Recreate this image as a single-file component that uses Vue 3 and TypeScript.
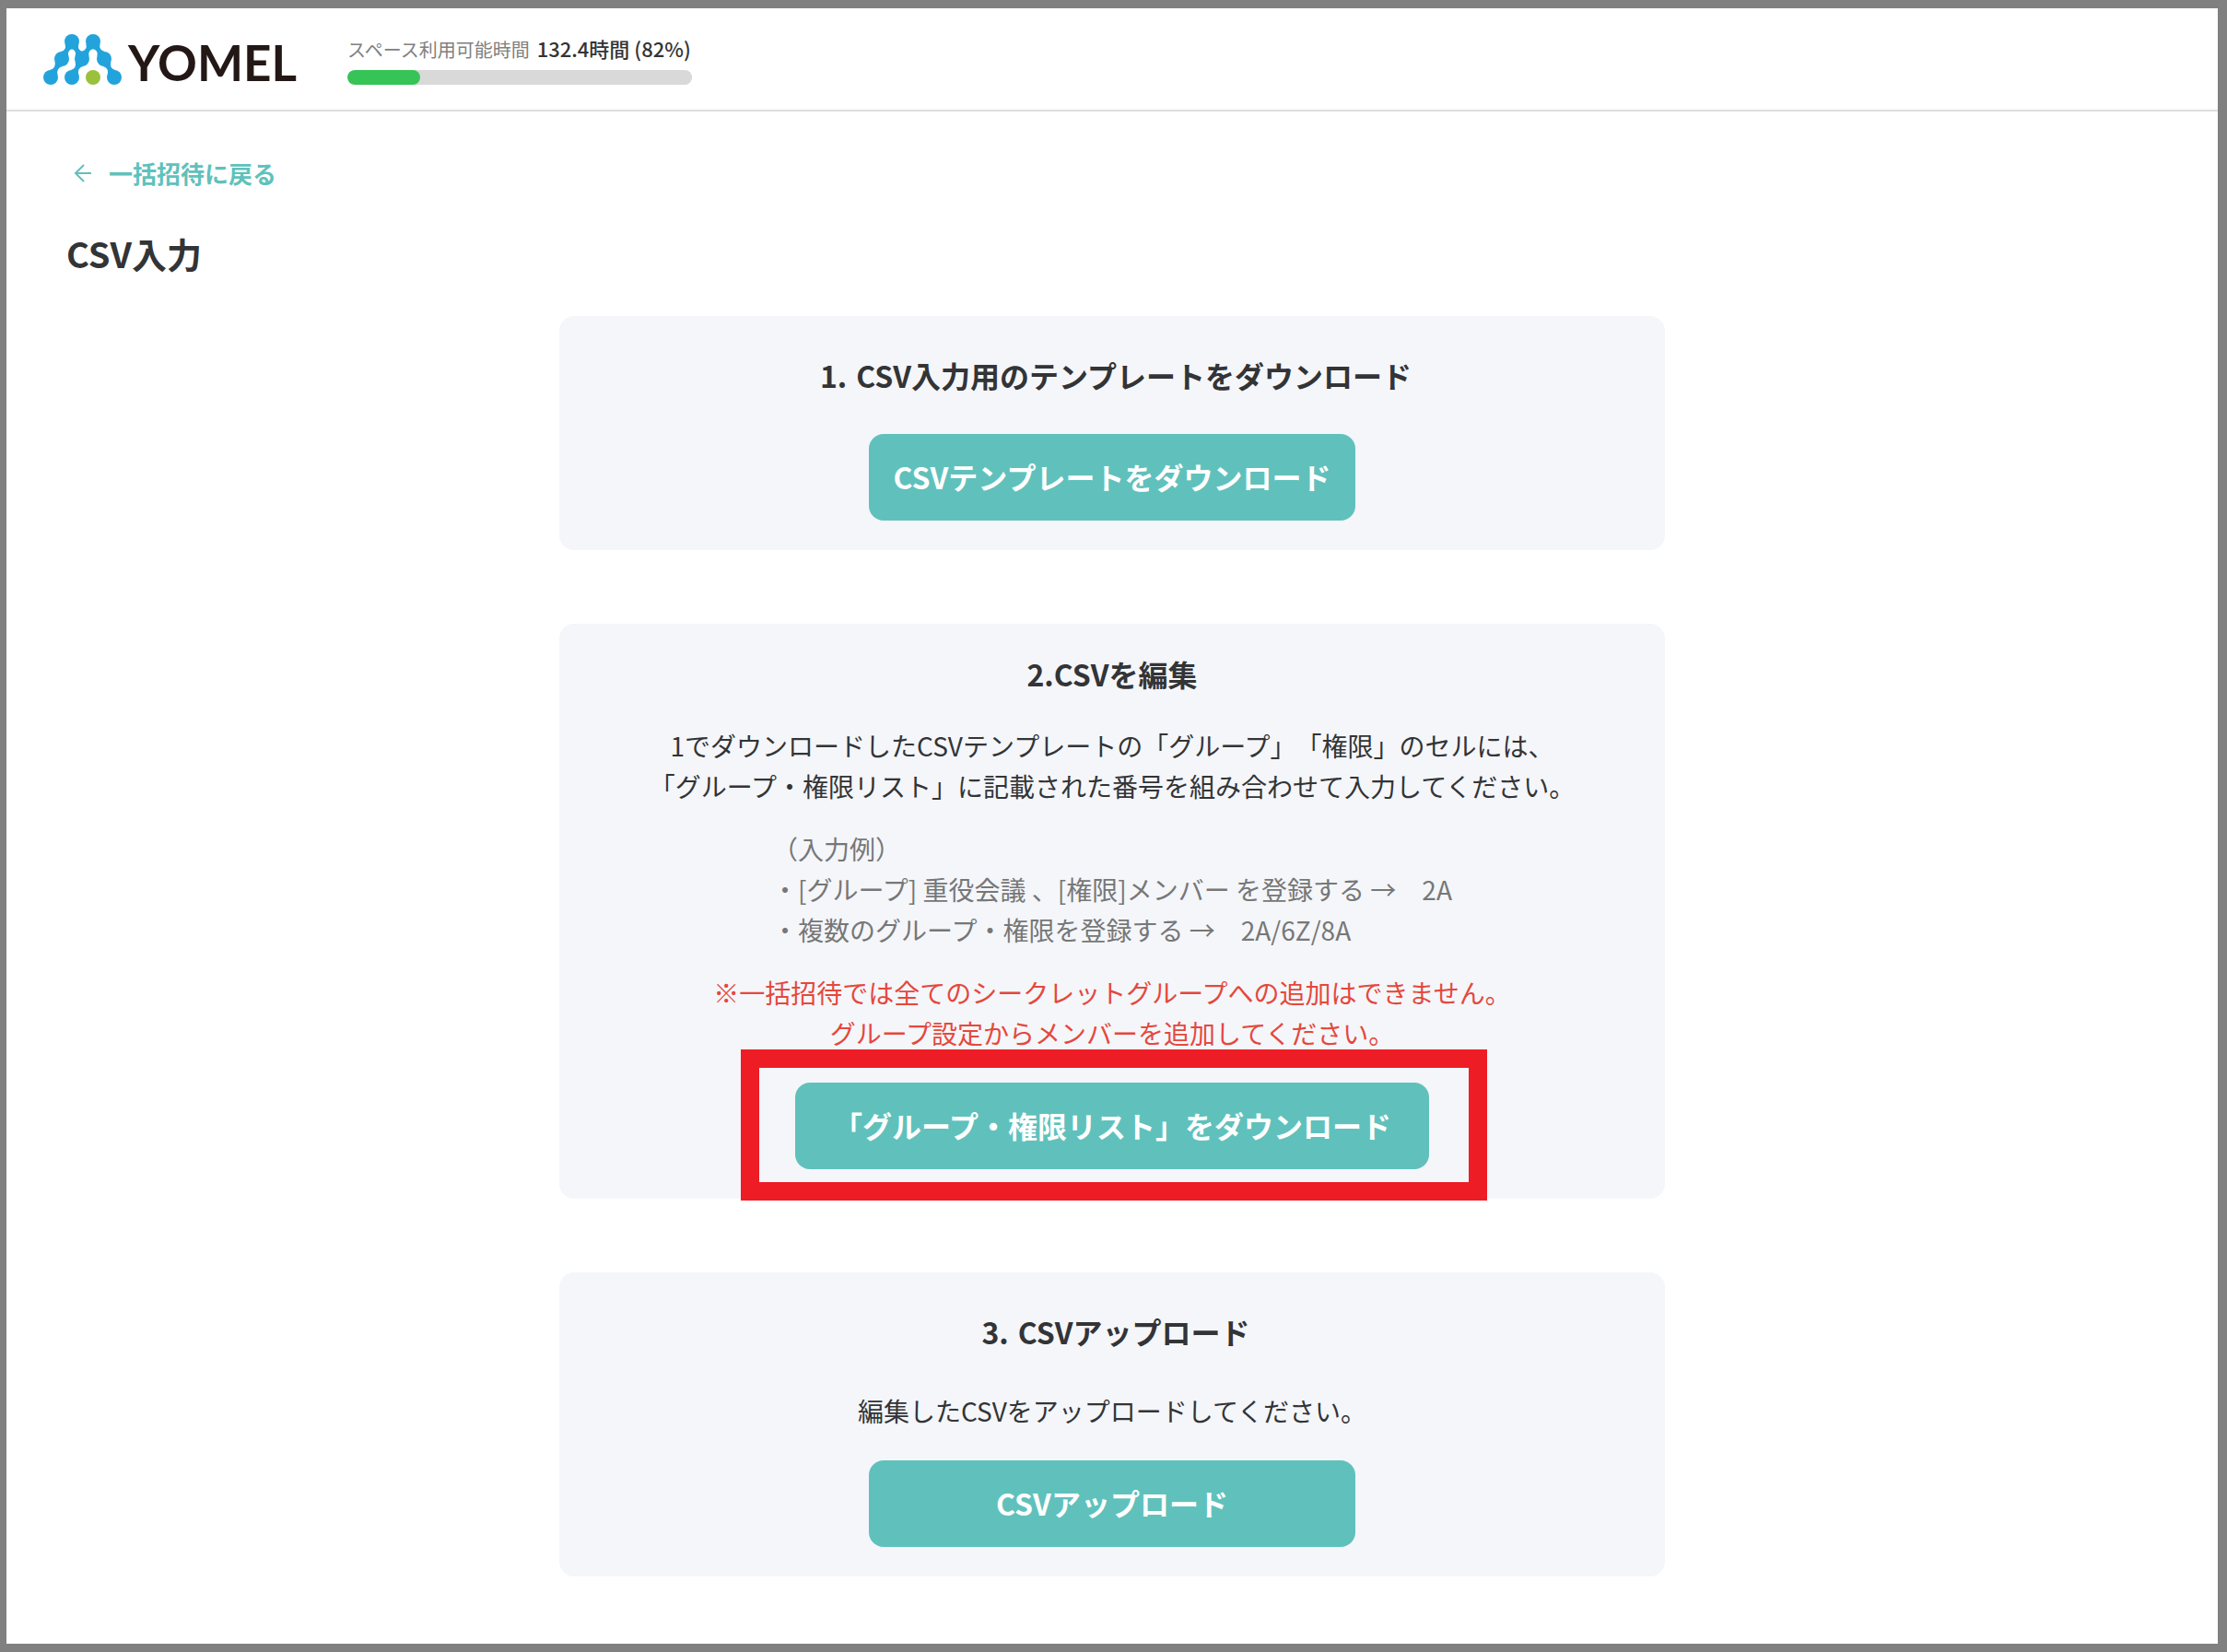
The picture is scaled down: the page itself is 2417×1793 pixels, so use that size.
<script setup lang="ts">
interface Point {
  x: number
  y: number
}

const RADIUS = 8

const nodes: Record<string, Point> = {
  topLeft: { x: 31, y: 9 },
  topRight: { x: 54, y: 9 },
  midLeft: { x: 20, y: 28 },
  midCenter: { x: 42, y: 28 },
  midRight: { x: 66, y: 28 },
  baseLeft: { x: 8, y: 48 },
  baseCenter: { x: 31, y: 48 },
  baseRight: { x: 77, y: 48 },
}

const links: [string, string][] = [
  ['topLeft', 'midLeft'],
  ['topLeft', 'midCenter'],
  ['topRight', 'midCenter'],
  ['topRight', 'midRight'],
  ['midLeft', 'baseLeft'],
  ['midCenter', 'baseCenter'],
  ['midRight', 'baseRight'],
]

// Outline of the narrowing neck that joins two dots of the logo mark.
function neck(a: Point, b: Point): string {
  const length = Math.hypot(b.x - a.x, b.y - a.y)
  const ux = (b.x - a.x) / length
  const uy = (b.y - a.y) / length
  const at = (along: number, side: number): string =>
    `${(a.x + ux * along - uy * side).toFixed(2)} ${(a.y + uy * along + ux * side).toFixed(2)}`
  const along = RADIUS * 0.8
  const side = RADIUS * 0.6
  return [
    `M${at(along, side)}`,
    `Q${at(length / 2, 0)} ${at(length - along, side)}`,
    `L${at(length - along, -side)}`,
    `Q${at(length / 2, 0)} ${at(along, -side)}Z`,
  ].join(' ')
}

const necks = links.map(([from, to]) => neck(nodes[from], nodes[to]))

const usage = { remaining: '132.4時間 (82%)', bar: 21 }
</script>

<template>
  <div class="page" lang="ja">
    <header class="header">
      <a class="logo" href="#" aria-label="YOMEL">
        <svg class="logo-mark" viewBox="0 0 86 57" aria-hidden="true">
          <g fill="#23a3dc">
            <path v-for="d in necks" :key="d" :d="d" />
            <circle v-for="(node, name) in nodes" :key="name" :cx="node.x" :cy="node.y" :r="RADIUS" />
          </g>
          <circle cx="54" cy="48" :r="RADIUS" fill="#9bc03c" />
        </svg>
        <span class="logo-name">YOMEL</span>
      </a>
      <div class="usage">
        <label class="usage-label" for="usage-bar">
          <span>スペース利用可能時間</span>
          <span class="usage-value">{{ usage.remaining }}</span>
        </label>
        <progress id="usage-bar" class="usage-bar" :value="usage.bar" max="100"></progress>
      </div>
    </header>

    <main class="main">
      <a class="back" href="#">
        <svg class="back-icon" viewBox="0 0 20 20" aria-hidden="true">
          <path d="M19 10H2M11 1L2 10L11 19" fill="none" stroke="currentColor" stroke-width="2" />
        </svg>
        <span>一括招待に戻る</span>
      </a>
      <h1 class="title">CSV入力</h1>

      <div class="steps">
        <section class="card">
          <h2 class="card-title numbered">
            <span>1.</span>
            <span>CSV入力用のテンプレートをダウンロード</span>
          </h2>
          <button class="button" type="button">CSVテンプレートをダウンロード</button>
        </section>

        <section class="card card-edit">
          <h2 class="card-title">2.CSVを編集</h2>
          <div class="guide">
            <p class="text">
              1でダウンロードしたCSVテンプレートの「グループ」「権限」のセルには、<br />
              「グループ・権限リスト」に記載された番号を組み合わせて入力してください。
            </p>
            <p class="text example">
              （入力例）<br />
              ・[グループ] 重役会議 、[権限]メンバー を登録する →　2A<br />
              ・複数のグループ・権限を登録する →　2A/6Z/8A
            </p>
            <p class="text warning">
              ※一括招待では全てのシークレットグループへの追加はできません。<br />
              グループ設定からメンバーを追加してください。
            </p>
          </div>
          <div class="marked">
            <button class="button button-wide" type="button">「グループ・権限リスト」をダウンロード</button>
            <span class="marker" aria-hidden="true"></span>
          </div>
        </section>

        <section class="card">
          <h2 class="card-title numbered">
            <span>3.</span>
            <span>CSVアップロード</span>
          </h2>
          <p class="text upload-note">編集したCSVをアップロードしてください。</p>
          <button class="button" type="button">CSVアップロード</button>
        </section>
      </div>
    </main>
  </div>
</template>

<style>
body {
  margin: 0;
}
</style>

<style scoped>
.page {
  box-sizing: border-box;
  min-height: 100vh;
  border: solid #808080;
  border-width: 9px 10px 9px 7px;
  background: #fff;
  color: #333436;
  font-family: "Noto Sans CJK JP", "Noto Sans", sans-serif;
  text-spacing-trim: space-all;
}

.header {
  display: flex;
  align-items: center;
  gap: 55px;
  height: 110px;
  padding-left: 40px;
  border-bottom: 2px solid #dedede;
}

.logo {
  display: flex;
  align-items: center;
  gap: 6px;
  color: #231815;
  text-decoration: none;
}

.logo-mark {
  width: 86px;
  height: 57px;
}

.logo-name {
  padding-top: 8px;
  font-family: Lato, sans-serif;
  font-size: 53px;
  font-weight: 700;
  line-height: 56px;
}

.usage {
  display: flex;
  flex-direction: column;
  gap: 6px;
  width: 374px;
}

.usage-label {
  display: flex;
  align-items: baseline;
  gap: 8px;
  color: #808080;
  font-size: 20px;
  line-height: 32px;
  white-space: nowrap;
}

.usage-value {
  color: #333436;
  font-size: 22px;
  font-weight: 500;
}

.usage-bar {
  display: block;
  width: 100%;
  height: 16px;
  border: 0;
  border-radius: 8px;
  background: #d9d9d9;
  overflow: hidden;
  appearance: none;
}

.usage-bar::-webkit-progress-bar {
  border-radius: 8px;
  background: #d9d9d9;
}

.usage-bar::-webkit-progress-value {
  border-radius: 8px;
  background: #36c456;
}

.main {
  padding: 47px 65px 64px;
}

.back {
  display: flex;
  align-items: center;
  gap: 18px;
  width: fit-content;
  padding-left: 8px;
  color: #60c1bc;
  font-size: 26px;
  font-weight: 700;
  line-height: 40px;
  text-decoration: none;
}

.back-icon {
  width: 20px;
  height: 20px;
}

.title {
  margin: 39px 0 40px;
  font-size: 38px;
  font-weight: 700;
  line-height: 56px;
}

.steps {
  display: flex;
  flex-direction: column;
  gap: 80px;
  max-width: 1200px;
  margin: 0 auto;
}

.card {
  display: flex;
  flex-direction: column;
  align-items: center;
  padding: 40px 32px 32px;
  border-radius: 16px;
  background: #f4f6fa;
}

.card-edit {
  padding-top: 30px;
}

.card-title {
  margin: 0 0 40px;
  font-size: 32px;
  font-weight: 700;
  line-height: 48px;
}

.numbered {
  display: flex;
  gap: 10px;
  padding-left: 8px;
}

.card-edit .card-title {
  margin-bottom: 32px;
}

.guide {
  display: flex;
  flex-direction: column;
  align-items: center;
  gap: 24px;
  margin-bottom: 32px;
}

.text {
  margin: 0;
  font-size: 28px;
  line-height: 44px;
  text-align: center;
}

.example {
  color: #777;
  text-align: left;
}

.warning {
  color: #e5483c;
}

.upload-note {
  margin-bottom: 32px;
}

.button {
  min-width: 528px;
  height: 94px;
  padding: 0 24px 2px;
  border: 0;
  border-radius: 16px;
  background: #60c1bc;
  color: #fff;
  font-family: inherit;
  font-size: 32px;
  font-weight: 700;
  cursor: pointer;
}

.button-wide {
  min-width: 688px;
}

.marked {
  position: relative;
  display: flex;
}

.marker {
  position: absolute;
  inset: -36px -63px -34px -59px;
  border: 20px solid #ee1c25;
  pointer-events: none;
}
</style>
